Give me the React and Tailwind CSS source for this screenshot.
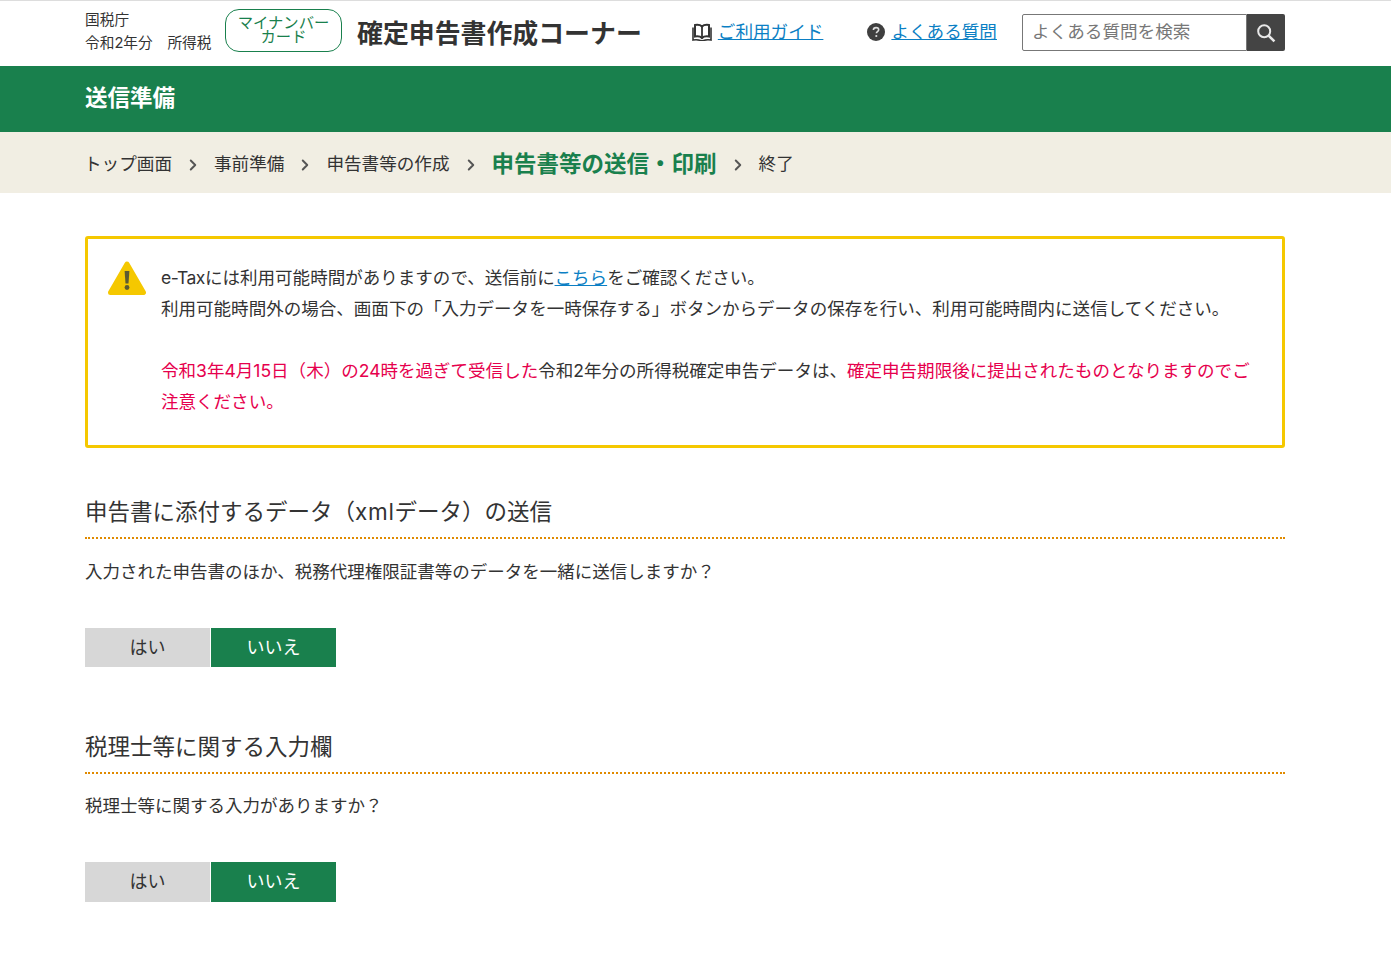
import React from 'react';
import { ChevronRight } from 'lucide-react';

const FONT = '[font-family:Inter,"Noto_Sans_CJK_JP","Liberation_Sans",sans-serif]';

const BookIcon = () => (
  <svg width="20" height="18" viewBox="0 0 20 18" className="shrink-0">
    <path d="M10 3.5C8.5 2 5.5 1.6 3 2v11.5c2.5-.4 5.5 0 7 1.5 1.5-1.5 4.5-1.9 7-1.5V2C14.5 1.6 11.5 2 10 3.5z" fill="none" stroke="#333" strokeWidth="2" />
    <path d="M10 3.5v12" stroke="#333" strokeWidth="1.8" />
    <path d="M1 4.5v12.5c3-.5 6-.2 8 .8h2c2-1 5-1.3 8-.8V4.5" fill="none" stroke="#333" strokeWidth="1.6" />
  </svg>
);

const HelpIcon = () => (
  <svg width="18" height="18" viewBox="0 0 18 18" className="shrink-0">
    <circle cx="9" cy="9" r="9" fill="#3f3f3f" />
    <path d="M6.4 7c0-1.6 1.2-2.4 2.7-2.4 1.5 0 2.6.9 2.6 2.2 0 1.8-2.3 1.9-2.3 3.5" fill="none" stroke="#ddd" strokeWidth="1.6" />
    <circle cx="9.3" cy="13" r="1.1" fill="#ddd" />
  </svg>
);

const WarningIcon = () => (
  <svg width="38" height="36" viewBox="0 0 38 36" className="shrink-0">
    <path d="M19 4 L35.5 32.5 H2.5 Z" fill="#f5c800" stroke="#f5c800" strokeWidth="5" strokeLinejoin="round" />
    <path d="M16.6 11h4.8l-.9 12.5h-3z" fill="#5c5a32" />
    <circle cx="19" cy="27.5" r="2.4" fill="#5c5a32" />
  </svg>
);

const SearchIcon = () => (
  <svg width="20" height="20" viewBox="0 0 20 20">
    <circle cx="8.2" cy="8.2" r="6" fill="none" stroke="#e8e8e8" strokeWidth="2" />
    <path d="M12.6 12.6 L18.4 18.4" stroke="#e8e8e8" strokeWidth="2.6" />
  </svg>
);

const Arrow = () => (
  <ChevronRight className="w-[18px] h-[18px] mx-3 text-[#555] mt-[4px]" strokeWidth={2.6} />
);

const Crumb = ({ children }) => (
  <>
    <span className="pt-[4px]">{children}</span>
    <Arrow />
  </>
);

const YesNo = ({ tall }) => (
  <div className={`flex gap-px text-[18px] leading-none pb-[2px] ${tall ? 'h-[42px]' : 'h-[41px]'}`}>
    <button className="w-[125px] bg-[#d7d7d7] text-[#333]">はい</button>
    <button className="w-[125px] bg-[#19804d] text-white">いいえ</button>
  </div>
);

const App = () => {
  return (
    <div className={`${FONT} min-h-[958px] bg-white text-[#333] border-t border-[#dddddd]`}>
      {/* Header */}
      <header className="h-[65px] pl-[85px] pr-[106px] pb-[6px] flex items-center">
        <div className="w-[140px] text-[14.7px] leading-[23px] pt-[2px] shrink-0">
          <div>国税庁</div>
          <div className="whitespace-pre">令和2年分　所得税</div>
        </div>
        <div className="w-[117px] h-[43px] shrink-0 border border-[#19804d] rounded-[14px] pb-[2px] flex items-center justify-center text-center text-[#19804d] text-[15.3px] leading-[14px]">
          マイナンバー<br />カード
        </div>
        <div className="ml-[15px] mt-[8px] text-[25.9px] font-bold whitespace-nowrap">確定申告書作成コーナー</div>
        <a className="ml-[50px] mt-[4px] flex items-center gap-[6px] text-[17.6px] text-[#0b7fc4] whitespace-nowrap">
          <BookIcon />
          <span className="underline">ご利用ガイド</span>
        </a>
        <a className="ml-[44px] mt-[4px] flex items-center gap-[6px] text-[17.6px] text-[#0b7fc4] whitespace-nowrap">
          <HelpIcon />
          <span className="underline">よくある質問</span>
        </a>
        <div className="ml-auto mt-[4px] flex h-[37px]">
          <div className="w-[225px] border border-[#777] rounded-l-[2px] pl-[9px] flex items-center text-[17.6px] text-[#777] whitespace-nowrap">
            よくある質問を検索
          </div>
          <div className="w-[38px] bg-[#444] rounded-r-[2px] flex items-center justify-center">
            <SearchIcon />
          </div>
        </div>
      </header>

      {/* Title bar */}
      <div className="h-[66px] bg-[#19804d] px-[85px] pb-[3px] flex items-center text-white text-[22.5px] font-bold">
        送信準備
      </div>

      {/* Steps */}
      <nav className="h-[61px] bg-[#f1eee3] px-[84px] flex items-center text-[17.6px] whitespace-nowrap">
        <Crumb>トップ画面</Crumb>
        <Crumb>事前準備</Crumb>
        <Crumb>申告書等の作成</Crumb>
        <span className="text-[22.5px] font-bold text-[#19804d] pt-[2px]">申告書等の送信・印刷</span>
        <Arrow />
        <span className="pt-[4px]">終了</span>
      </nav>

      <main className="pl-[85px] pr-[106px] pt-[43px]">
        {/* Notice */}
        <div className="h-[212px] border-[3px] border-[#f5c800] rounded-[3px] flex gap-[15px] px-[20px] pt-[23px] text-[17.55px] leading-[31px]">
          <div className="-mt-[2px]"><WarningIcon /></div>
          <div>
            <p><span className="tracking-[-0.5px]">e-Tax</span>には利用可能時間がありますので、送信前に<a className="text-[#0b7fc4] underline">こちら</a>をご確認ください。</p>
            <p>利用可能時間外の場合、画面下の「入力データを一時保存する」ボタンからデータの保存を行い、利用可能時間内に送信してください。</p>
            <p className="mt-[31px]">
              <span className="text-[#e6004d]">令和3年4月15日（木）の24時を過ぎて受信した</span>令和2年分の所得税確定申告データは、<span className="text-[#e6004d]">確定申告期限後に提出されたものとなりますのでご注意ください。</span>
            </p>
          </div>
        </div>

        {/* xml data */}
        <section className="mt-[44px]">
          <h2 className="h-[47px] text-[22.5px] leading-[40px] border-b-2 border-dotted border-[#e08a00]">申告書に添付するデータ（<span className="tracking-[0.7px]">xml</span>データ）の送信</h2>
          <p className="mt-[17px] text-[17.5px] leading-[31px]">入力された申告書のほか、税務代理権限証書等のデータを一緒に送信しますか？</p>
          <div className="mt-[41px]"><YesNo /></div>
        </section>

        {/* tax accountant */}
        <section className="mt-[58px]">
          <h2 className="h-[47px] text-[22.5px] leading-[40px] border-b-2 border-dotted border-[#e08a00]">税理士等に関する入力欄</h2>
          <p className="mt-[16px] text-[17.5px] leading-[31px]">税理士等に関する入力がありますか？</p>
          <div className="mt-[41px]"><YesNo tall /></div>
        </section>
      </main>
    </div>
  );
};

export default App;
